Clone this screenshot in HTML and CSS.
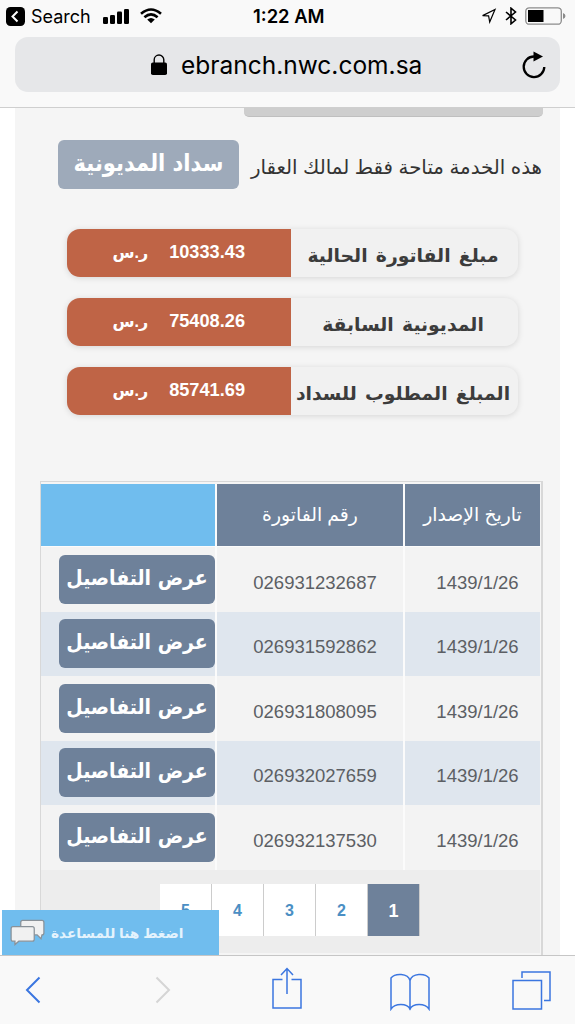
FILE: index.html
```html
<!DOCTYPE html>
<html lang="ar">
<head>
    <meta charset="UTF-8">
    <meta name="viewport" content="width=device-width, initial-scale=1.0">
    <title>سداد المديونية</title>
    <link rel="stylesheet" href="styles.css">
</head>
<body>

<header class="browser-top">
    <div class="status-bar">
        <div class="status-left">
            <svg class="back-app" width="19" height="19" viewBox="0 0 19 19"><rect width="19" height="19" rx="4.5"/><path d="M11.5 4.5L6.5 9.5l5 5" fill="none" stroke="#fff" stroke-width="2"/></svg>
            <span class="search-label">Search</span>
            <svg class="signal" width="26" height="16" viewBox="0 0 26 16"><rect y="9" width="5" height="7" rx="1.3"/><rect x="7" y="7" width="5" height="9" rx="1.3"/><rect x="14" y="3.5" width="5" height="12.5" rx="1.3"/><rect x="21" y="1" width="5" height="15" rx="1.3"/></svg>
            <svg width="22" height="16" viewBox="0 0 22 16" fill="none" stroke="#000" stroke-width="2.6"><path d="M1 5.8Q11-2.8 21 5.8M4.4 9.3Q11 3.4 17.6 9.3"/><path d="M7.2 11.6Q11 8.2 14.8 11.6L11 15.2z" fill="#000" stroke="none"/></svg>
        </div>
        <span class="clock">1:22 AM</span>
        <div class="status-right">
            <svg width="16" height="16" viewBox="0 0 16 16"><path d="M1.6 7.6L14 1.4 8.7 14 7.6 7.8z" fill="none" stroke="#000" stroke-width="1.2"/></svg>
            <svg width="12" height="18" viewBox="0 0 12 18" fill="none" stroke="#000" stroke-width="1.6"><path d="M1 5l9.5 8L6 16.8V1.2L10.5 5 1 13"/></svg>
            <svg width="41" height="18" viewBox="0 0 41 18"><rect x=".8" y=".8" width="35.5" height="16.4" rx="3.5" fill="none" stroke="#8c8c8c" stroke-width="1.3"/><rect x="3" y="3" width="15.5" height="12"/><path d="M38 6q2.5 1 2.5 3T38 12z" fill="#8c8c8c"/></svg>
        </div>
    </div>
    <div class="address-bar">
        <svg class="lock" width="16" height="21" viewBox="0 0 16 21"><rect y="8.5" width="16" height="12.5" rx="1.8"/><path d="M3.2 9V5.800a4.800 4.800 0 0 1 9.600 0V9" fill="none" stroke="#000" stroke-width="1.4"/></svg>
        <span class="address">ebranch.nwc.com.sa</span>
        <svg class="reload" width="24" height="28" viewBox="0 0 24 28"><path d="M12 5.500A10.300 10.300 0 1 0 22.300 16" fill="none" stroke="#000" stroke-width="2.3"/><path d="M11.5 .5l9.500 5-9.500 5z"/></svg>
    </div>
</header>

<main class="viewport">
    <div class="page" dir="rtl">
        <div class="previous-panel"></div>

        <div class="notice">
            <p class="notice-text">هذه الخدمة متاحة فقط لمالك العقار</p>
            <button class="btn pay-btn">سداد المديونية</button>
        </div>

        <div class="bills">
            <div class="bill">
                <div class="bill-label">مبلغ الفاتورة الحالية</div>
                <div class="bill-value"><b>10333.43</b><span class="currency">ر.س</span></div>
            </div>
            <div class="bill">
                <div class="bill-label">المديونية السابقة</div>
                <div class="bill-value"><b>75408.26</b><span class="currency">ر.س</span></div>
            </div>
            <div class="bill">
                <div class="bill-label">المبلغ المطلوب للسداد</div>
                <div class="bill-value"><b>85741.69</b><span class="currency">ر.س</span></div>
            </div>
        </div>

        <div class="invoices">
            <div class="row head">
                <div class="cell">تاريخ الإصدار</div>
                <div class="cell">رقم الفاتورة</div>
                <div class="cell empty"></div>
            </div>
            <div class="row">
                <div class="cell">1439/1/26</div>
                <div class="cell">026931232687</div>
                <div class="cell action"><button class="btn">عرض التفاصيل</button></div>
            </div>
            <div class="row alt">
                <div class="cell">1439/1/26</div>
                <div class="cell">026931592862</div>
                <div class="cell action"><button class="btn">عرض التفاصيل</button></div>
            </div>
            <div class="row">
                <div class="cell">1439/1/26</div>
                <div class="cell">026931808095</div>
                <div class="cell action"><button class="btn">عرض التفاصيل</button></div>
            </div>
            <div class="row alt">
                <div class="cell">1439/1/26</div>
                <div class="cell">026932027659</div>
                <div class="cell action"><button class="btn">عرض التفاصيل</button></div>
            </div>
            <div class="row">
                <div class="cell">1439/1/26</div>
                <div class="cell">026932137530</div>
                <div class="cell action"><button class="btn">عرض التفاصيل</button></div>
            </div>
            <div class="pager">
                <span class="page-link active">1</span>
                <span class="page-link">2</span>
                <span class="page-link">3</span>
                <span class="page-link">4</span>
                <span class="page-link">5</span>
            </div>
        </div>
    </div>

    <!-- live help tab -->
    <div class="help">
        <svg width="35" height="27" viewBox="0 0 36 28" fill="#f1f1f1" stroke="#8a9299" stroke-width="1.3"><path d="M13 1.500h20q2 0 2 2v11q0 2-2 2l-1 4-4-4H13q-2 0-2-2v-11q0-2 2-2z"/><path d="M3 8h20q2 0 2 2v11q0 2-2 2H9l-4 3.500V23H3q-2 0-2-2V10q0-2 2-2z"/></svg>
        <span class="help-text" dir="rtl">اضغط هنا للمساعدة</span>
    </div>
</main>

<footer class="toolbar">
    <svg width="16" height="28" viewBox="0 0 16 28"><path d="M14.500 1.500L2 14l12.500 12.500" stroke-width="2"/></svg>
    <svg class="forward" width="16" height="28" viewBox="0 0 16 28"><path d="M1.500 1.500L14 14 1.500 26.500" stroke-width="2"/></svg>
    <svg class="share" width="30" height="42" viewBox="0 0 30 42"><path d="M10.500 12.500H1V41h28V12.500h-9.500M15 27V2M9 8l6-6.500L21 8"/></svg>
    <svg class="book" width="40" height="38" viewBox="0 0 40 38"><path d="M20 7.500C18 0 5 0 1 5v31c4-6 16-6 19 0 3-6 15-6 19 0V5C35 0 22 0 20 7.500V37"/></svg>
    <svg class="tabs" width="39" height="39" viewBox="0 0 39 39"><path d="M1 9.500h28.500V38H1zM10 7V1h28v28.500h-6"/></svg>
</footer>

</body>
</html>
```
FILE: styles.css
```css
* {
    margin: 0;
    padding: 0;
    box-sizing: border-box;
}
body {
    width: 575px;
    height: 1024px;
    display: flex;
    flex-direction: column;
    overflow: hidden;
    background: #fff;
    font-family: "Liberation Sans", "DejaVu Sans", sans-serif;
}
svg {
    display: block;
    flex: none;
}
/* browser header */
.browser-top {
    height: 108px;
    flex: none;
    background: #f9f9f9;
    border-bottom: 1px solid #cfcfcf;
}
.status-bar {
    height: 37px;
    padding: 0 9px 5px 6px;
    display: grid;
    grid-template-columns: 247px auto 1fr;
    align-items: center;
    font-family: Inter, sans-serif;
}
.status-left,
.status-right {
    display: flex;
    align-items: center;
}
.search-label {
    width: 60px;
    margin-left: 6px;
    font-size: 18px;
}
.signal {
    margin: 0 11px 0 12px;
}
.clock {
    font-size: 18.4px;
    font-weight: 600;
}
.status-right {
    justify-content: flex-end;
    gap: 8px;
}
.address-bar {
    height: 55px;
    margin: 0 15px;
    padding: 0 14px 0 136px;
    display: flex;
    align-items: center;
    background: #e6e7e9;
    border-radius: 13px;
}
.address {
    margin-left: 14px;
    font-family: Inter, sans-serif;
    font-size: 24.5px;
    line-height: 30px;
}
.reload {
    margin-left: auto;
}
/* page content */
.viewport {
    flex: 1;
    min-height: 0;
    position: relative;
    overflow: hidden;
}
.page {
    width: 545px;
    height: 860px;
    margin: 0 auto;
    padding: 0 18px 0 25px;
    background: #f5f5f5;
}
.previous-panel {
    width: 299px;
    height: 9px;
    margin-right: -1px;
    background: #cecece;
    border-bottom: 1px solid #bfbfbf;
    border-radius: 0 0 5px 5px;
}
.notice {
    height: 49px;
    margin-top: 23px;
    display: flex;
    justify-content: space-between;
    align-items: center;
    padding-left: 18px;
}
.notice-text {
    padding-top: 6px;
    font-size: 19.8px;
    white-space: nowrap;
    color: #333;
}
.btn {
    width: 156px;
    height: 49px;
    padding-bottom: 3px;
    border: none;
    border-radius: 6px;
    background: #6e819a;
    color: #fff;
    font: bold 21px "DejaVu Sans Condensed", "DejaVu Sans", sans-serif;
    font-stretch: condensed;
    white-space: nowrap;
}
.pay-btn {
    width: 181px;
    background: #9eaaba;
    font-size: 23.4px;
}
.bills {
    margin: 40px 24px 0 27px;
    display: flex;
    flex-direction: column;
    gap: 21px;
}
.bill {
    height: 48px;
    display: flex;
    border-radius: 13px;
    background: #f1f1f1;
    box-shadow: 0 1px 6px rgba(0, 0, 0, 0.13);
}
.bill-label {
    width: 227px;
    display: flex;
    align-items: center;
    justify-content: center;
    padding: 6px 3px 0 0;
    font-size: 18.8px;
    font-weight: bold;
    white-space: nowrap;
    word-spacing: 3px;
    color: #3c3c3c;
}
.bill-value {
    flex: 1;
    display: flex;
    align-items: center;
    padding: 0 46px 2px 0;
    gap: 21px;
    background: #bf6446;
    color: #fff;
    font-size: 18.2px;
    font-weight: bold;
    border-radius: 13px 0 0 13px;
}
.currency {
    font-size: 16px;
}
/* invoices table */
.invoices {
    width: 503px;
    margin: 66px -1px 0 0;
    padding: 2px 1px 0 0;
    border: 1px solid #d8d8d8;
    border-right-width: 2px;
    height: 480px;
}
.row {
    height: 64.5px;
    display: grid;
    grid-template-columns: 135px 186px 1fr;
    gap: 2px;
    background: #fbfbfb;
}
.cell {
    display: flex;
    align-items: center;
    justify-content: center;
    padding: 7px 0 0 10px;
    background: #f3f3f3;
    color: #5c5f64;
    font-size: 18.5px;
}
.alt .cell {
    background: #dfe6ee;
}
.head {
    height: 63px;
    padding-bottom: 1px;
}
.head .cell {
    padding: 0;
    background: #6e819a;
    color: #fff;
    font-size: 18.8px;
}
.head .empty {
    background: #70bdee;
}
.cell.action {
    justify-content: flex-start;
    padding: 0;
}
.pager {
    height: 83px;
    padding: 14px 121px 0 0;
    display: flex;
    gap: 1px;
    background: #ededed;
}
.page-link {
    width: 51px;
    height: 52px;
    line-height: 54px;
    text-align: center;
    background: #fff;
    color: #4b8fc4;
    font-size: 16px;
    font-weight: bold;
    box-shadow: 1px 0 #ccc;
}
.page-link.active {
    background: #6e819a;
    color: #fff;
    font-size: 18px;
}
.help {
    position: absolute;
    left: 2px;
    bottom: 0;
    width: 217px;
    height: 45px;
    padding-left: 8px;
    display: flex;
    align-items: center;
    gap: 6px;
    background: #70bdee;
}
.help-text {
    color: #e4f3fd;
    font-size: 13.7px;
    font-weight: bold;
}
/* browser toolbar */
.toolbar {
    height: 69px;
    flex: none;
    padding: 0 24px 0 25px;
    display: flex;
    align-items: center;
    background: #f9f9f9;
    border-top: 1px solid #c6c6c6;
    fill: none;
    stroke: #3b76e0;
    stroke-width: 1.5;
}
.toolbar .forward {
    margin-left: 114px;
    stroke: #d5d5d5;
}
.toolbar .share {
    margin: 0 88px 4px 101px;
}
.toolbar .book {
    margin-top: 3px;
}
.toolbar .tabs {
    margin-left: 82px;
}
```
